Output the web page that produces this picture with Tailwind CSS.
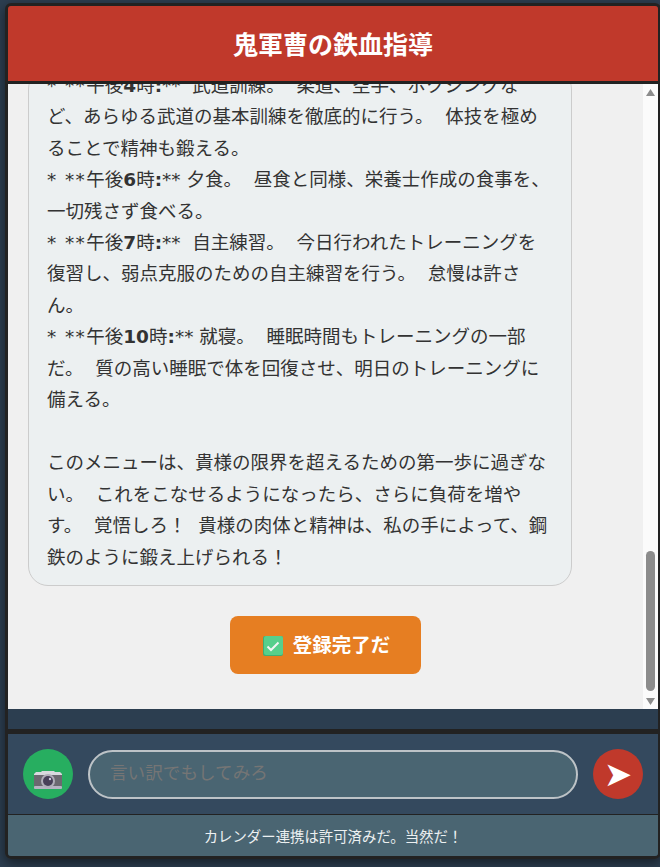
<!DOCTYPE html>
<html lang="ja">
<head>
  <meta charset="UTF-8" />
  <meta name="viewport" content="width=device-width, initial-scale=1" />
  <title>鬼軍曹の鉄血指導</title>
  <script src="https://cdn.jsdelivr.net/npm/@tailwindcss/browser@4"></script>
</head>
<body class="h-[867px] overflow-hidden bg-[#2c3e50] pt-[3px] pl-[5px] font-['DejaVu_Sans','Noto_Sans_CJK_JP',sans-serif]">
  <div class="flex h-[856px] w-[656px] flex-col overflow-hidden rounded-[6px] border-3 border-[#222222] shadow-[0_4px_12px_rgba(0,0,0,0.5)]">
    <header class="flex h-[78px] shrink-0 items-center justify-center border-b-3 border-[#222222] bg-[#c0392b] pt-[4px] text-[25px] font-bold text-white">
      <h1>鬼軍曹の鉄血指導</h1>
    </header>

    <main class="flex h-[625px] shrink-0 bg-[#f0f0f0]">
      <!-- only the end of the conversation is in view -->
      <div class="flex min-w-0 flex-1 flex-col justify-end overflow-hidden px-5">
        <div class="w-[544px] shrink-0 rounded-[20px] border border-[#cccccc] bg-[#ecf0f1] pr-[20px] pb-[12px] pl-[18px] text-[18.5px] leading-[31.45px] whitespace-pre-wrap text-[#333333]"><span class="tracking-[1.4px]">* **</span>午後<b>4</b>時<b>:</b>**  武道訓練。  柔道、空手、ボクシングなど、あらゆる武道の基本訓練を徹底的に行う。  体技を極めることで精神も鍛える。
<span class="tracking-[1.4px]">* **</span>午後<b>6</b>時<b>:</b>** 夕食。  昼食と同様、栄養士作成の食事を、一切残さず食べる。
<span class="tracking-[1.4px]">* **</span>午後<b>7</b>時<b>:</b>**  自主練習。  今日行われたトレーニングを復習し、弱点克服のための自主練習を行う。  怠慢は許さん。
<span class="tracking-[1.4px]">* **</span>午後<b>10</b>時<b>:</b>** 就寝。  睡眠時間もトレーニングの一部だ。  質の高い睡眠で体を回復させ、明日のトレーニングに備える。

このメニューは、貴様の限界を超えるための第一歩に過ぎない。  これをこなせるようになったら、さらに負荷を増やす。  覚悟しろ！  貴様の肉体と精神は、私の手によって、鋼鉄のように鍛え上げられる！</div>
        <div class="flex shrink-0 justify-center pt-[30px] pb-[35px]">
          <button class="flex h-[58px] w-[191px] items-center justify-center gap-[10px] rounded-[8px] bg-[#e67e22] pl-[2px] text-[19.5px] font-bold text-white">
            <svg class="mt-[1px] h-[20px] w-[20px]" viewBox="0 0 20 20"><rect width="20" height="20" rx="2" fill="#3fae74" /><rect x="1" y="0" width="19" height="19" rx="2" fill="#57cf8c" /><path d="M4.5 10.5l3.5 3.5 7.5-7.5" fill="none" stroke="#f3f5f4" stroke-width="2" /></svg>
            <span class="mt-[2px]">登録完了だ</span>
          </button>
        </div>
      </div>
      <div class="flex w-[15px] shrink-0 flex-col items-center bg-[#fbfbfb]">
        <svg class="mt-[5px] h-[7px] w-[9px]" viewBox="0 0 9 7"><path d="M4.5 0L9 7H0z" fill="#8c8c8c" /></svg>
        <div class="mt-[455px] h-[140px] w-[9px] rounded-full bg-[#8c8c8c]"></div>
        <svg class="mt-[7px] h-[7px] w-[9px]" viewBox="0 0 9 7"><path d="M0 0H9L4.5 7z" fill="#8c8c8c" /></svg>
      </div>
    </main>

    <div class="h-[20px] shrink-0 bg-[#2c3e50]"></div>

    <div class="flex h-[86px] shrink-0 items-center gap-[15px] border-t-[5px] border-b border-t-[#222222] border-b-[#222222] bg-[#34495e] px-[15px]">
      <button class="flex h-[50px] w-[50px] shrink-0 items-center justify-center rounded-full bg-[#27ae60]">
        <svg class="mt-[11px] h-[18px] w-[28px]" viewBox="0 0 28 18">
          <path d="M2 1h5l1-1h12l1 1h5l2 2v3H0V3z" fill="#d8d9de" />
          <rect x="0" y="4" width="28" height="12" fill="#6b6870" />
          <rect x="0" y="15" width="28" height="3" rx="1" fill="#b6b2c2" />
          <circle cx="14" cy="10" r="7" fill="#b0adb9" />
          <circle cx="14" cy="10" r="5" fill="#483f58" />
          <circle cx="16" cy="8" r="1.2" fill="#cfcbe0" />
        </svg>
      </button>
      <input class="h-[49px] min-w-0 flex-1 rounded-full border-2 border-[#bdc3c7] bg-[#4a6572] pr-[21px] pb-[2px] pl-[20px] text-[17.6px] text-white outline-none placeholder:text-[#757575]" placeholder="言い訳でもしてみろ" />
      <button class="flex h-[50px] w-[50px] shrink-0 items-center justify-center rounded-full bg-[#c0392b] text-[34px] leading-none text-white">➤</button>
    </div>

    <footer class="flex flex-1 items-center justify-center bg-[#4a6572] pt-[4px] text-[14.4px] text-[#ecf0f1]">カレンダー連携は許可済みだ。当然だ！</footer>
  </div>
</body>
</html>
